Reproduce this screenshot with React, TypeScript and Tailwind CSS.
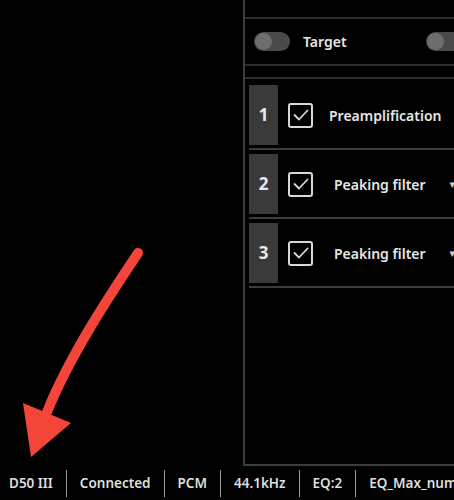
import type { ReactNode } from "react";

const FONT = { fontFamily: '"Noto Sans", "DejaVu Sans", sans-serif' };

const BANDS = [
  { n: 1, label: "Preamplification", select: false },
  { n: 2, label: "Peaking filter", select: true },
  { n: 3, label: "Peaking filter", select: true },
];

const STATUS = ["D50 III", "Connected", "PCM", "44.1kHz", "EQ:2", "EQ_Max_num"];

function Toggle() {
  return (
    <div className="flex h-[19px] w-[36px] shrink-0 items-center rounded-full bg-[#4a4a4a] px-[1px]">
      <div className="h-[17px] w-[17px] rounded-full bg-[#6e6e6e]" />
    </div>
  );
}

function Check() {
  return (
    <div className="flex h-[25px] w-[25px] shrink-0 items-center justify-center rounded-[3px] border-2 border-[#d8d8d8]">
      <svg width="16" height="12" viewBox="0 0 16 12" fill="none">
        <path d="M1.5 6 L6 10.5 L14.5 1.5" stroke="#d8d8d8" strokeWidth="1.8" strokeLinecap="round" strokeLinejoin="round" />
      </svg>
    </div>
  );
}

function BandRow({ n, label, select }: { n: number; label: string; select: boolean }) {
  return (
    <div className="flex h-[69px] items-start border-b-2 border-[#3c3c3c] pt-[4px]">
      <div className="flex h-[60px] w-[29px] shrink-0 items-center justify-center bg-[#3a3a3a] text-[17px] font-bold text-[#e8e8e8]">
        {n}
      </div>
      <div className="flex h-[60px] items-center">
        <div className="ml-[10px]">
          <Check />
        </div>
        <span
          className={
            "whitespace-nowrap text-[14px] font-semibold text-[#e6e6e6] " + (select ? "ml-[21px]" : "ml-[16px]")
          }
        >
          {label}
        </span>
        {select && <span className="ml-[24px] text-[11px] text-[#cfcfcf]">▾</span>}
      </div>
    </div>
  );
}

function Sep() {
  return <div className="h-[27px] w-px shrink-0 bg-[#9a9a9a]" />;
}

export default function App() {
  const items: ReactNode[] = [];
  STATUS.forEach((s, i) => {
    if (i > 0) items.push(<Sep key={"s" + i} />);
    items.push(
      <span
        key={s}
        className={
          "whitespace-nowrap pr-[13px] text-[13.5px] font-semibold text-[#dedede] " + (i === 0 ? "pl-[9px]" : "pl-[13px]")
        }
      >
        {s}
      </span>
    );
  });

  return (
    <div className="relative flex h-[500px] w-[454px] flex-col overflow-hidden bg-black" style={FONT}>
      <div className="flex h-[466px] shrink-0">
        <div className="w-[243px] shrink-0" />
        <div className="flex w-[260px] shrink-0 flex-col border-b-2 border-l-2 border-[#3c3c3c]">
          <div className="h-[19px] shrink-0 border-b-2 border-[#2e2e2e]" />
          <div className="flex h-[47px] shrink-0 items-center border-b-2 border-[#2e2e2e] pl-[9px]">
            <Toggle />
            <span className="ml-[13px] text-[14px] font-semibold text-[#e6e6e6]">Target</span>
            <div className="ml-[79px]">
              <Toggle />
            </div>
          </div>
          <div className="h-[13px] shrink-0 border-b-2 border-[#2e2e2e]" />
          <div className="pl-[4px] pt-[2px]">
            {BANDS.map((b) => (
              <BandRow key={b.n} {...b} />
            ))}
          </div>
        </div>
      </div>
      <div className="flex flex-1 items-center">{items}</div>

      <svg className="pointer-events-none absolute left-0 top-0" width="454" height="500">
        <path d="M138 253 C 110 295, 70 355, 47 412" stroke="#f4453b" strokeWidth="10" strokeLinecap="round" fill="none" />
        <polygon points="23,403 71,423 31,457" fill="#f4453b" />
      </svg>
    </div>
  );
}
